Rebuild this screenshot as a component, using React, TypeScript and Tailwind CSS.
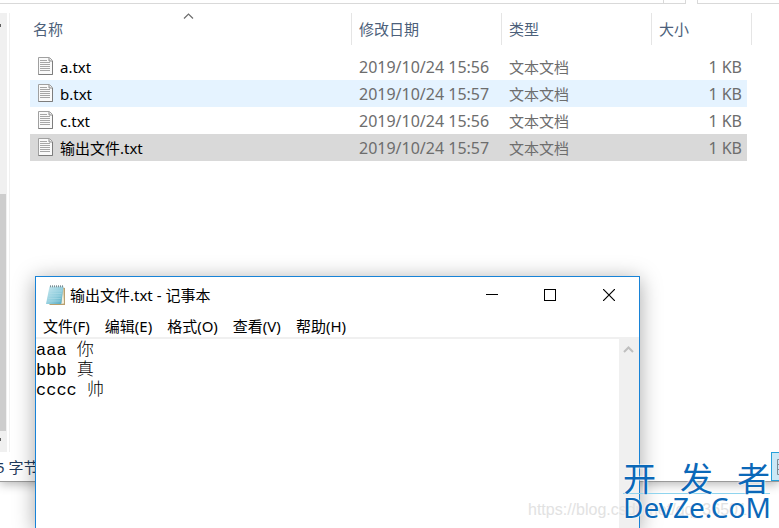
import React from "react";

type FileRow = {
  name: string;
  modified: string;
  kind: string;
  size: string;
  bgColor: string;
};

const files: FileRow[] = [
  { name: "a.txt", modified: "2019/10/24 15:56", kind: "文本文档", size: "1 KB", bgColor: "bg-white" },
  { name: "b.txt", modified: "2019/10/24 15:57", kind: "文本文档", size: "1 KB", bgColor: "bg-[#e5f3ff]" },
  { name: "c.txt", modified: "2019/10/24 15:56", kind: "文本文档", size: "1 KB", bgColor: "bg-white" },
  { name: "输出文件.txt", modified: "2019/10/24 15:57", kind: "文本文档", size: "1 KB", bgColor: "bg-[#d9d9d9]" },
];

const menus = ["文件(F)", "编辑(E)", "格式(O)", "查看(V)", "帮助(H)"];

const TextFileIcon = () => (
  <svg className="mb-0.5 h-[18px] w-[15px] shrink-0" viewBox="0 0 15 18" aria-hidden="true">
    <path d="M.5 .5h11l3 3v14H.5z" fill="#fafafa" stroke="#a0a0a0" />
    <path d="M14.5 4v13.5H.5" fill="none" stroke="#7d7d7d" />
    <path d="M11 1v3h3" fill="#e4e4e4" stroke="#8f8f8f" />
    <path d="M2 3.5h7M2 5.5h10M2 7.5h10M2 9.5h10M2 11.5h10M2 13.5h10" stroke="#a6a6a6" />
  </svg>
);

const NotepadIcon = () => (
  <svg className="h-5 w-5 shrink-0" viewBox="0 0 20 20" aria-hidden="true">
    <defs>
      <linearGradient id="pad" x1="0" y1="0" x2="1" y2="1">
        <stop offset="0" stopColor="#c9eaf1" />
        <stop offset="0.6" stopColor="#8ccbdb" />
        <stop offset="1" stopColor="#4fa6c0" />
      </linearGradient>
    </defs>
    <path d="M17 2.5l2 .5v17H4l-1-1z" fill="#b8a070" />
    <path d="M17.3 2.5L18 18.500l-3 .5z" fill="#f4efdc" />
    <path d="M3.500 1.500h14L15.300 19H0z" fill="url(#pad)" />
    <path d="M3.500 6h12.500M3 8.500h12.500M2.600 11h12.500M2.200 13.500h12.500M1.700 16h12.500" stroke="#b5dfe8" strokeWidth="0.5" />
    <path d="M4.500 .3v2M6.500 .3v2M8.500 .3v2M10.500 .3v2M12.500 .3v2M14.500 .3v2M16.500 .3v2" stroke="#7b8d93" />
  </svg>
);

const AddressBar = () => (
  <div className="flex h-1 shrink-0">
    <div className="flex-1 border-b border-[#d9d9d9]" />
    <div className="mr-[11px] w-[23px] border-x border-b border-[#d9d9d9]" />
    <div className="w-[82px] border-b border-l border-[#d9d9d9]" />
  </div>
);

const SideScrollbar = () => (
  <div className="flex w-[10px] shrink-0 border-r border-[#f0f0f0]">
    <div className="flex w-[7px] flex-col justify-between bg-[#f0f0f0] pt-[11px] pb-[11px]">
      <span className="h-[3px] w-px bg-[#606060]" />
      <span className="mt-auto mb-[7px] h-[237px] w-[6px] bg-[#cdcdcd]" />
      <span className="h-[3px] w-px bg-[#606060]" />
    </div>
  </div>
);

const FileTable = () => (
  <table className="ml-5 w-[722px] table-fixed border-separate border-spacing-0 self-start text-left">
    <colgroup>
      <col className="w-[322px]" />
      <col className="w-[150px]" />
      <col className="w-[150px]" />
      <col className="w-[95px]" />
      <col className="w-[5px]" />
    </colgroup>
    <thead className="text-[#4c607a]">
      <tr className="h-8">
        <th className="relative border-r border-[#e5e5e5] pl-[3px] font-normal">
          名称
          <svg className="absolute top-0 left-[153px] h-2 w-[11px]" viewBox="0 0 11 8" aria-hidden="true">
            <path d="M1 5.500L5.500 1L10 5.500" fill="none" stroke="#6d6d6d" strokeWidth="1.200" />
          </svg>
        </th>
        <th className="border-r border-[#e5e5e5] pl-[7px] font-normal">修改日期</th>
        <th className="border-r border-[#e5e5e5] pl-[7px] font-normal">类型</th>
        <th colSpan={2} className="border-r border-[#e5e5e5] pl-[7px] font-normal">大小</th>
      </tr>
    </thead>
    <tbody className="text-[#6d6d6d]">
      <tr className="h-2">
        <td colSpan={5} />
      </tr>
      {files.map((file) => (
        <tr key={file.name} className="h-[27px]">
          <td className={`pl-2 text-black ${file.bgColor}`}>
            <div className="flex items-center gap-[7px]">
              <TextFileIcon />
              {file.name}
            </div>
          </td>
          <td className={`pl-[7px] text-base leading-5 ${file.bgColor}`}>{file.modified}</td>
          <td className={`pl-[7px] ${file.bgColor}`}>{file.kind}</td>
          <td className={`pr-[5px] text-right text-base leading-5 ${file.bgColor}`}>{file.size}</td>
          <td />
        </tr>
      ))}
    </tbody>
  </table>
);

const Explorer = () => (
  <section className="flex h-[calc(100vh-46px)] flex-col overflow-hidden border-b border-[#9a9a9a] bg-white shadow-[0_2px_10px_rgba(0,0,0,0.3)]">
    <AddressBar />
    <div className="flex min-h-0 flex-1 pt-[9px]">
      <SideScrollbar />
      <FileTable />
    </div>
    <footer className="flex h-[29px] shrink-0 items-center justify-between text-[#1e395b]">
      <span className="-ml-1 whitespace-nowrap">5 字节</span>
      <button
        type="button"
        aria-label="详细信息"
        className="flex h-full w-2 items-center justify-end overflow-hidden border-y border-l border-[#26a0da] bg-[#cbe8f6]"
      >
        <svg className="h-4 w-[2px]" viewBox="0 0 2 16" aria-hidden="true">
          <path d="M2 .5H.5v15H2M.5 5.500H2M.5 10.500H2" fill="none" stroke="#7a8a94" />
        </svg>
      </button>
    </footer>
  </section>
);

const TitleBar = () => (
  <header className="flex h-9 shrink-0 items-center pl-[10px]">
    <NotepadIcon />
    <h1 className="ml-1 flex-1">输出文件.txt - 记事本</h1>
    <button type="button" aria-label="最小化" className="flex h-full w-[59px] items-center justify-center">
      <svg className="h-3 w-3" viewBox="0 0 12 12" shapeRendering="crispEdges">
        <path d="M0 5.500h12" stroke="#000" />
      </svg>
    </button>
    <button type="button" aria-label="最大化" className="flex h-full w-[58px] items-center justify-center">
      <svg className="h-3 w-3" viewBox="0 0 12 12" shapeRendering="crispEdges">
        <path d="M.5 .5h11v11H.5z" fill="none" stroke="#000" />
      </svg>
    </button>
    <button type="button" aria-label="关闭" className="flex h-full w-[60px] items-center justify-center">
      <svg className="h-3 w-3" viewBox="0 0 12 12">
        <path d="M0 0l12 12M12 0L0 12" stroke="#000" strokeWidth="1.200" />
      </svg>
    </button>
  </header>
);

const Notepad = () => (
  <section className="absolute top-[276px] right-[139px] -bottom-px left-[35px] flex flex-col border border-[#1883d7] bg-white text-black shadow-[0_3px_20px_rgba(0,0,0,0.35)]">
    <TitleBar />
    <nav className="flex h-[26px] shrink-0 items-center gap-[15px] border-b-2 border-[#f0f0f0] pt-0.5 pl-[7px]">
      {menus.map((menu) => (
        <button key={menu} type="button">
          {menu}
        </button>
      ))}
    </nav>
    <div className="flex min-h-0 flex-1">
      <textarea
        aria-label="文本编辑区"
        className="flex-1 resize-none overflow-hidden pt-0.5 font-['Liberation_Mono','Noto_Sans_CJK_SC',monospace] text-[17px] leading-5 font-light outline-none"
        defaultValue={"aaa 你\nbbb 真\ncccc 帅"}
      />
      <div className="w-5 bg-[#f0f0f0] pt-[6px] pl-1">
        <svg className="h-2 w-[11px]" viewBox="0 0 11 8" aria-hidden="true">
          <path d="M1 7l4.500-4.500L10 7" fill="none" stroke="#bfbfbf" strokeWidth="2" />
        </svg>
      </div>
    </div>
  </section>
);

const Watermark = () => (
  <>
    <p className="absolute bottom-2 left-[528px] font-['Liberation_Sans',sans-serif] text-base leading-5 text-[#e2e2e2]">
      https://blog.csdn.net/qq_36501
    </p>
    <div className="absolute right-[9px] bottom-2 w-[147px] text-[#0b68b8] [text-shadow:0_0_2px_#fff,0_0_2px_#fff]">
      <div className="flex h-[30px] items-center justify-between border-b border-[#8fd4ee] text-[33px] leading-7">
        <span>开</span>
        <span>发</span>
        <span>者</span>
      </div>
      <div className="text-[28px] leading-[26px]">DevZe.CoM</div>
    </div>
  </>
);

const App = () => {
  return (
    <main className="relative h-screen overflow-hidden bg-white font-['Noto_Sans','Noto_Sans_CJK_SC',sans-serif] text-[15px] leading-5">
      <Explorer />
      <Notepad />
      <Watermark />
    </main>
  );
};

export default App;
